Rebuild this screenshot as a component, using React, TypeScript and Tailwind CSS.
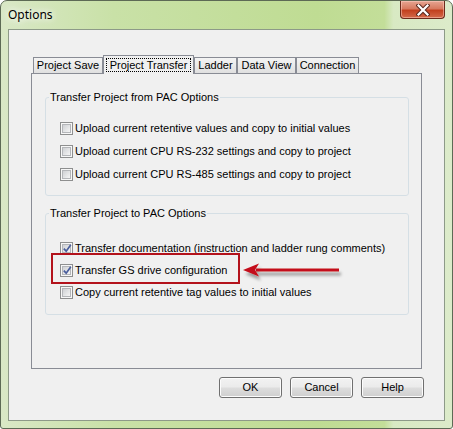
import type { ReactNode } from "react";

const tabs = [
  { label: "Project Save", width: "w-[70px]", active: false },
  { label: "Project Transfer", width: "w-[91px]", active: true },
  { label: "Ladder", width: "w-[43px]", active: false },
  { label: "Data View", width: "w-[59px]", active: false },
  { label: "Connection", width: "w-[63px]", active: false },
];

// Win7-style 13px checkbox: grey outer rim, white gap, shaded well.
function CheckBox({ checked }: { checked?: boolean }) {
  return (
    <span className="flex h-[13px] w-[13px] shrink-0 items-center justify-center border border-[#8e8f8f] bg-[#f7f7f7]">
      <span className="relative h-[9px] w-[9px] border border-[#b4b6b9] bg-gradient-to-br from-[#cfd1d4] to-[#f5f5f5]">
        {checked && (
          <svg
            className="absolute -left-[1px] -top-[2px]"
            width="11"
            height="11"
            viewBox="0 0 11 11"
          >
            <path
              d="M1.8 5.6 L4.2 8.2 L8.8 1.8"
              fill="none"
              stroke="#4a5e9c"
              strokeWidth="1.7"
            />
          </svg>
        )}
      </span>
    </span>
  );
}

function Row({ checked, children }: { checked?: boolean; children: ReactNode }) {
  return (
    <div className="flex h-[13px] items-center gap-[2px]">
      <CheckBox checked={checked} />
      <span className="whitespace-nowrap leading-[13px]">{children}</span>
    </div>
  );
}

// fieldset padding stays 0 so the legend sits 4px in from the border.
function Group({ title, className, children }: { title: string; className: string; children: ReactNode }) {
  return (
    <fieldset className={`mx-[13px] w-[364px] rounded-[3px] border border-[#d5dfe5] ${className}`}>
      <legend className="ml-[3px] px-[1px] leading-[13px]">{title}</legend>
      {children}
    </fieldset>
  );
}

function Button({ children }: { children: ReactNode }) {
  return (
    <button className="flex h-[21px] w-[63px] items-center justify-center rounded-[3px] border border-[#707070] bg-[linear-gradient(#f2f2f2_0%,#ebebeb_48%,#dddddd_52%,#cfcfcf_100%)] leading-none shadow-[inset_0_0_0_1px_#fcfcfc]">
      {children}
    </button>
  );
}

export default function App() {
  return (
    <div className="relative flex h-[429px] w-[453px] flex-col overflow-hidden rounded-t-[7px] rounded-b-[3px] border border-[#5d6a55] bg-[linear-gradient(90deg,#d9e8c6_0%,#c9e1a7_25%,#bfdc93_70%,#c3de99_85%,#d8e9c3_87%,#dcebca_100%)]">
      {/* title bar */}
      <div className="flex h-[28px] shrink-0 items-start justify-between">
        <span className="mt-[6px] pl-[7px] font-['Noto_Sans',sans-serif] text-[12px] leading-[16px] text-black [text-shadow:0_0_6px_#ffffff,0_0_10px_#ffffff]">
          Options
        </span>
        <div className="mr-[7px] flex h-[18px] w-[45px] items-center justify-center rounded-b-[4px] border border-t-0 border-[#6b2a1c] bg-[linear-gradient(#e6a592_0%,#d77a60_45%,#c2401f_55%,#d46a4a_100%)] shadow-[inset_0_0_0_1px_rgba(255,210,200,0.5)]">
          <svg width="14" height="12" viewBox="0 0 14 12">
            <path
              d="M2.5 1.5 L11.5 10.5 M11.5 1.5 L2.5 10.5"
              stroke="#5a2a20"
              strokeWidth="4.2"
              strokeLinecap="square"
            />
            <path
              d="M2.5 1.5 L11.5 10.5 M11.5 1.5 L2.5 10.5"
              stroke="#ffffff"
              strokeWidth="2.2"
              strokeLinecap="square"
            />
          </svg>
        </div>
      </div>

      {/* client area */}
      <div className="mx-[7px] flex h-[392px] flex-col border border-[#8d9a88] bg-[#f0f0f0] font-['Liberation_Sans',Arial,sans-serif] text-[11px] text-black">
        <div className="pl-[22px] pt-[25px]">
          <div className="ml-[2px] flex h-[18px] items-end">
            {tabs.map((t) =>
              t.active ? (
                <div
                  key={t.label}
                  className={`relative z-10 -mb-px flex h-[19px] ${t.width} justify-center border border-b-0 border-[#898c95] bg-[#f0f0f0] px-[2px] pt-[2px]`}
                >
                  <span className="flex h-[14px] w-full items-center justify-center border border-dotted border-black leading-none">
                    {t.label}
                  </span>
                </div>
              ) : (
                <div
                  key={t.label}
                  className={`flex h-[16px] ${t.width} items-center justify-center border border-b-0 border-[#898c95] bg-gradient-to-b from-[#f4f4f4] to-[#e0e0e0] leading-none`}
                >
                  {t.label}
                </div>
              )
            )}
          </div>

          <div className="h-[296px] w-[391px] border border-[#898c95] bg-[#f0f0f0] pt-[17px]">
            <Group title="Transfer Project from PAC Options" className="pb-[14px]">
              <div className="flex flex-col gap-[10px] pl-[14px] pt-[18px]">
                <Row>Upload current retentive values and copy to initial values</Row>
                <Row>Upload current CPU RS-232 settings and copy to project</Row>
                <Row>Upload current CPU RS-485 settings and copy to project</Row>
              </div>
            </Group>

            <Group title="Transfer Project to PAC Options" className="mt-[11px] pb-[15px]">
              <div className="flex flex-col gap-[9px] pl-[14px] pt-[22px]">
                <Row checked>Transfer documentation (instruction and ladder rung comments)</Row>
                <Row checked>Transfer GS drive configuration</Row>
                <Row>Copy current retentive tag values to initial values</Row>
              </div>
            </Group>
          </div>
        </div>

        <div className="mt-[8px] flex justify-end gap-[8px] pr-[20px]">
          <Button>OK</Button>
          <Button>Cancel</Button>
          <Button>Help</Button>
        </div>
      </div>

      {/* annotation: red highlight box and arrow */}
      <div className="absolute left-[50px] top-[252px] h-[31px] w-[189px] border-2 border-[#b3121b]" />
      <svg className="absolute left-[238px] top-[258px]" width="112" height="26" viewBox="0 0 112 26">
        <defs>
          <filter id="arrowShadow" x="-10%" y="-50%" width="130%" height="220%">
            <feDropShadow dx="2" dy="4" stdDeviation="1.8" floodColor="#000000" floodOpacity="0.35" />
          </filter>
        </defs>
        <g filter="url(#arrowShadow)">
          <path d="M17 9.5 L100 9.5 L100 12.5 L17 12.5 Z" fill="#c4101a" />
          <path d="M4 11 L20 4.5 L16 11 L20 17.5 Z" fill="#c4101a" />
        </g>
      </svg>
    </div>
  );
}
